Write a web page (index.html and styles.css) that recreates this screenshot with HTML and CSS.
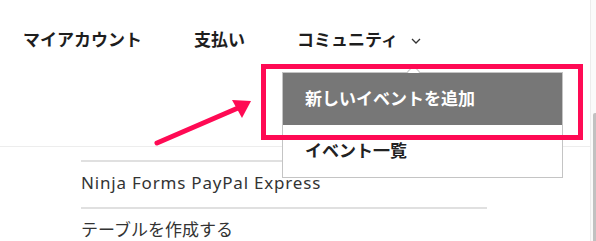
FILE: index.html
```html
<!DOCTYPE html>
<html lang="ja">
<head>
<meta charset="utf-8">
<title>メニュー</title>
<link rel="stylesheet" href="styles.css">
</head>
<body>
<div class="page">
  <header class="header">
    <ul class="nav">
      <li class="nav-item">マイアカウント</li>
      <li class="nav-item">支払い</li>
      <li class="nav-item">コミュニティ<svg class="chevron" width="10" height="6" viewBox="0 0 10 6"><path d="M1 1 L5 5 L9 1" fill="none" stroke="#333" stroke-width="1.3"/></svg></li>
    </ul>
  </header>
  <ul class="list">
    <li class="list-item latin">Ninja Forms PayPal Express</li>
    <li class="list-item">テーブルを作成する</li>
  </ul>

  <div class="dropdown">
    <span class="caret"></span>
    <div class="dd-item active">新しいイベントを追加</div>
    <div class="dd-item">イベント一覧</div>
  </div>
  <div class="highlight"></div>
  <svg class="arrow" width="596" height="241" viewBox="0 0 596 241">
    <line x1="157" y1="143" x2="238" y2="108" stroke="#ff0a54" stroke-width="5" stroke-linecap="round"/>
    <polygon points="232,100 251,101 242,118" fill="#ff0a54"/>
  </svg>
</div>
<div class="scrollbar"><div class="thumb"></div></div>
</body>
</html>
```

FILE: styles.css
```css
html, body {
  margin: 0;
  padding: 0;
}
body {
  display: flex;
  width: 596px;
  height: 241px;
  overflow: hidden;
  background: #fff;
  font-family: "Noto Sans", "Noto Sans CJK JP", sans-serif;
  color: #222;
}
.page {
  position: relative;
  width: 590px;
  height: 241px;
  overflow: hidden;
  flex: none;
  border-right: 1px solid #ececec;
}
.header {
  box-sizing: border-box;
  height: 147px;
  border-bottom: 1px solid #ededed;
  padding: 28px 0 0 23px;
}
.nav {
  display: flex;
  gap: 52px;
  list-style: none;
  margin: 0;
  padding: 0;
}
.nav-item {
  display: flex;
  align-items: center;
  font-size: 17px;
  line-height: 24px;
  font-weight: bold;
  color: #1e1e1e;
}
.chevron {
  margin-left: 13px;
  margin-top: 1px;
}
.list {
  list-style: none;
  margin: 13px 0 0 81px;
  padding: 0;
  width: 406px;
}
.list-item {
  border-top: 2px solid #e0e0e0;
  padding: 9px 0 12px;
  font-size: 17px;
  line-height: 24px;
  color: #333;
}
.list-item.latin {
  letter-spacing: 0.8px;
}
.dropdown {
  position: absolute;
  left: 282px;
  top: 72px;
  width: 279px;
  border: 1px solid #c4c4c4;
  background: #fff;
}
.caret {
  position: absolute;
  top: -6px;
  left: 126px;
  width: 8px;
  height: 8px;
  background: #fff;
  border-left: 1px solid #c4c4c4;
  border-top: 1px solid #c4c4c4;
  transform: rotate(45deg);
}
.dd-item {
  position: relative;
  height: 52px;
  line-height: 52px;
  padding-left: 22px;
  font-size: 17px;
  font-weight: bold;
  color: #222;
}
.dd-item.active {
  background: #777;
  color: #fff;
}
.highlight {
  position: absolute;
  left: 261px;
  top: 64px;
  width: 322px;
  height: 76px;
  box-sizing: border-box;
  border: 5px solid #ff0a54;
}
.arrow {
  position: absolute;
  left: 0;
  top: 0;
}
.scrollbar {
  flex: 1;
  background: #fafafa;
  padding-top: 113px;
}
.thumb {
  width: 3px;
  height: 128px;
  margin-left: 2px;
  background: #c1c1c1;
  border-radius: 2px 0 0 0;
}
```
